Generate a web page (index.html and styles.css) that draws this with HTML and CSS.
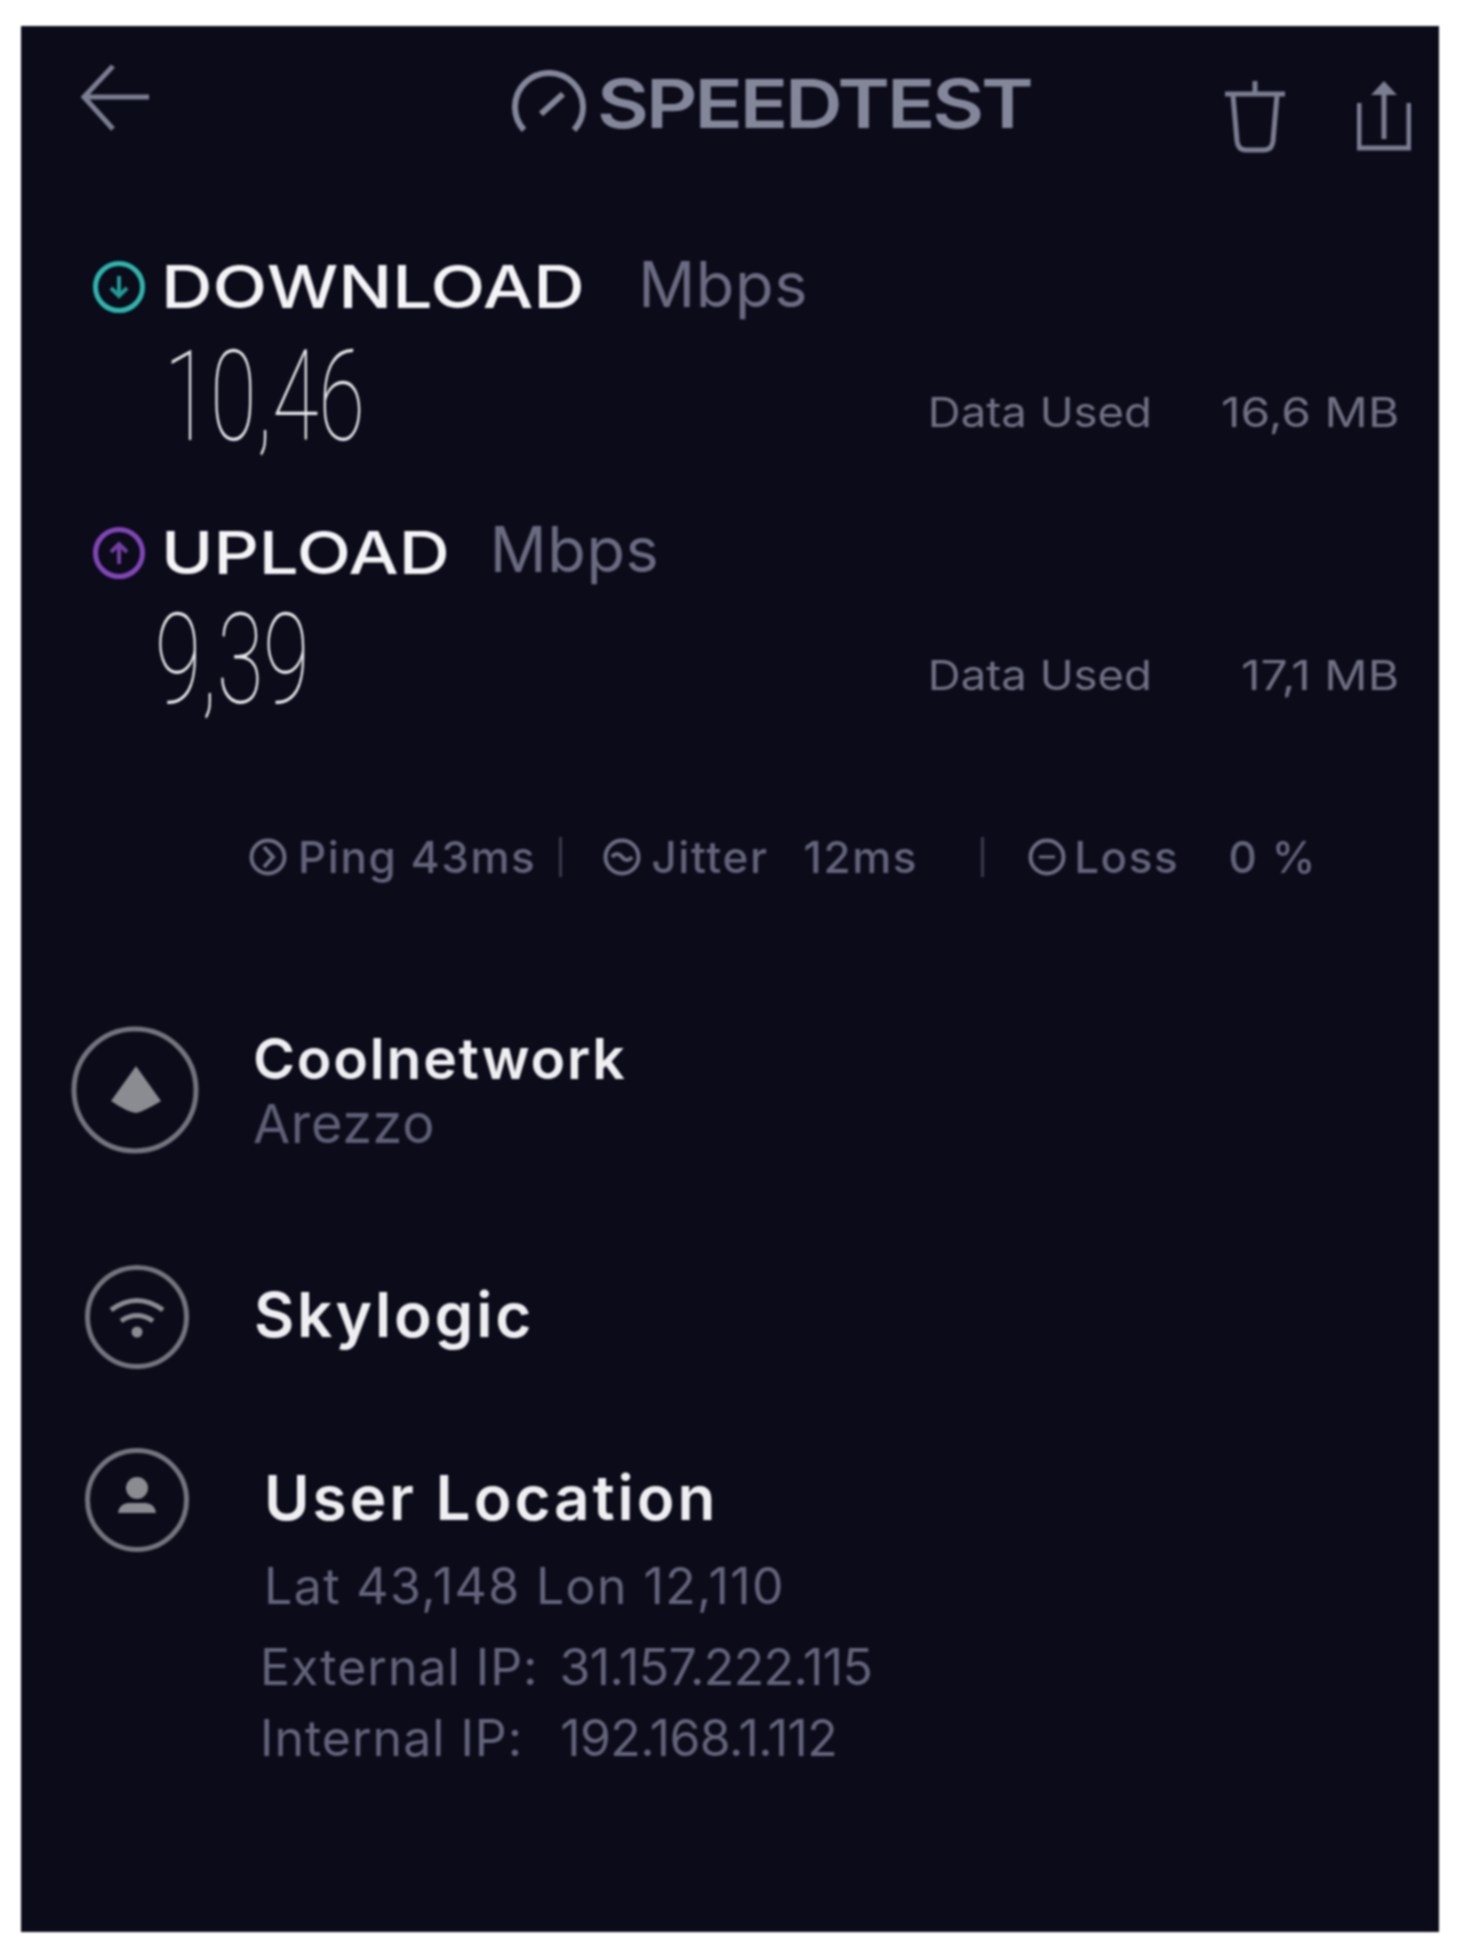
FILE: index.html
```html
<!DOCTYPE html>
<html lang="en">
<head>
<meta charset="utf-8">
<title>Speedtest result</title>
<link rel="stylesheet" href="styles.css">
</head>
<body>
<main class="card">
  <header class="topbar">
    <svg class="ic-back" width="69" height="66" viewBox="0 0 69 66"><path d="M68 32H3M32 1L3 32l29 32" fill="none" stroke="#7b7d90" stroke-width="5"/></svg>
    <div class="logo">
      <svg class="ic-gauge" width="74" height="62" viewBox="0 0 74 62"><path d="M12 60A34 34 0 1 1 62 60" fill="none" stroke="#84869a" stroke-width="6"/><path d="M29 44L51 24" stroke="#84869a" stroke-width="6"/></svg>
      <span class="logo-text">SPEEDTEST</span>
    </div>
    <svg class="ic-trash" width="62" height="72" viewBox="0 0 62 72"><path d="M31 0v12M1 13h60" stroke="#7b7d90" stroke-width="5" fill="none"/><path d="M9 14l4 46q1 9 9 9h18q8 0 9-9l4-46" stroke="#7b7d90" stroke-width="5" fill="none"/></svg>
    <svg class="ic-share" width="54" height="70" viewBox="0 0 54 70"><path d="M2 22v45h50V22" stroke="#7b7d90" stroke-width="5" fill="none"/><path d="M27 6v52" stroke="#7b7d90" stroke-width="5"/><path d="M27 0L14 14h26z" fill="#7b7d90"/></svg>
  </header>

  <section class="metric metric-down">
    <div class="metric-head">
      <svg class="ic-dir" width="52" height="52" viewBox="0 0 52 52"><circle cx="26" cy="26" r="23.5" fill="none" stroke="#2fb5ad" stroke-width="5"/><path d="M26 15v20M18 27l8 8 8-8" fill="none" stroke="#239b96" stroke-width="4"/></svg>
      <span class="label">DOWNLOAD</span>
      <span class="unit unit-down">Mbps</span>
    </div>
    <div class="metric-body">
      <span class="value value-down">10,46</span>
      <span class="used">Data Used</span>
      <span class="used-val">16,6 MB</span>
    </div>
  </section>

  <section class="metric metric-up">
    <div class="metric-head">
      <svg class="ic-dir" width="52" height="52" viewBox="0 0 52 52"><circle cx="26" cy="26" r="23.5" fill="none" stroke="#8146b8" stroke-width="5"/><path d="M26 37V17M18 25l8-8 8 8" fill="none" stroke="#7240a3" stroke-width="4"/></svg>
      <span class="label label-up">UPLOAD</span>
      <span class="unit unit-up">Mbps</span>
    </div>
    <div class="metric-body">
      <span class="value value-up">9,39</span>
      <span class="used">Data Used</span>
      <span class="used-val">17,1 MB</span>
    </div>
  </section>

  <section class="stats">
    <svg class="ic-stat" width="38" height="38" viewBox="0 0 38 38"><circle cx="19" cy="19" r="16.5" fill="none" stroke="#6b6c80" stroke-width="4"/><path d="M15 9l9 10-9 10" fill="none" stroke="#6b6c80" stroke-width="4"/></svg>
    <span class="stat stat-ping">Ping 43ms</span>
    <i class="sep sep-a"></i>
    <svg class="ic-stat ic-jitter" width="38" height="38" viewBox="0 0 38 38"><circle cx="19" cy="19" r="16.5" fill="none" stroke="#6b6c80" stroke-width="4"/><path d="M9 19q5-6 10 0t10 0" fill="none" stroke="#6b6c80" stroke-width="4"/></svg>
    <span class="stat stat-jitter">Jitter</span>
    <span class="stat stat-jit-val">12ms</span>
    <i class="sep sep-b"></i>
    <svg class="ic-stat ic-loss" width="38" height="38" viewBox="0 0 38 38"><circle cx="19" cy="19" r="16.5" fill="none" stroke="#6b6c80" stroke-width="4"/><path d="M11 19h16" stroke="#6b6c80" stroke-width="3"/></svg>
    <span class="stat stat-loss">Loss</span>
    <span class="stat stat-loss-val">0 %</span>
  </section>

  <section class="row row-host">
    <svg class="ic-big" width="128" height="128" viewBox="0 0 128 128"><circle cx="64" cy="64" r="61" fill="none" stroke="#74747f" stroke-width="5"/><path d="M65 40L90 75Q72 86 65 87Q56 86 40 75z" fill="#8b8b92"/></svg>
    <div class="row-text">
      <div class="title title-host">Coolnetwork</div>
      <div class="sub">Arezzo</div>
    </div>
  </section>

  <section class="row row-isp">
    <svg class="ic-small" width="104" height="106" viewBox="0 0 104 106"><circle cx="52" cy="53" r="49.5" fill="none" stroke="#74747f" stroke-width="5"/><path d="M26 46q26-19 52 0M36 57q16-11 32 0" fill="none" stroke="#8b8b92" stroke-width="5"/><circle cx="52" cy="68" r="5.5" fill="#8b8b92"/></svg>
    <div class="title">Skylogic</div>
  </section>

  <section class="row row-user">
    <svg class="ic-small" width="104" height="106" viewBox="0 0 104 106"><circle cx="52" cy="53" r="49.5" fill="none" stroke="#74747f" stroke-width="5"/><circle cx="52" cy="41" r="11" fill="#8b8b92"/><path d="M33 66q1-9 10-10h18q9 1 10 10z" fill="#8b8b92"/></svg>
    <div class="row-text user-text">
      <div class="title title-user">User Location</div>
      <div class="detail detail-lat">Lat 43,148 Lon 12,110</div>
      <div class="detail detail-ip"><span class="ip-label">External IP:</span><span class="ip-val ip-ext">31.157.222.115</span></div>
      <div class="detail detail-ip2"><span class="ip-label">Internal IP:</span><span class="ip-val ip-int">192.168.1.112</span></div>
    </div>
  </section>
</main>
</body>
</html>
```
FILE: styles.css
```css
* { box-sizing: border-box; }
html, body { margin: 0; background: #fff; }
body { padding: 26px 22px 21px 21px; }
.card {
  height: 1906px;
  background: #0b0b1a;
  font-family: Inter, "Liberation Sans", sans-serif;
  overflow: hidden;
  filter: blur(1px);
}
.topbar { display: flex; align-items: flex-start; padding: 39px 0 0 60px; height: 235px; }
.ic-gauge { margin-left: 362px; }
.logo { display: flex; align-items: center; margin-top: 3px; }
.logo-text { margin-left: 11px; padding-top: 4px; font-size: 68px; line-height: 62px; font-weight: 600; color: #84869a; letter-spacing: -2.6px; transform: scaleX(1.175); transform-origin: left center; }
.ic-trash { margin-left: 258px; margin-top: 16px; }
.ic-share { margin-left: 71px; margin-top: 16px; }

.metric-head { display: flex; align-items: center; height: 52px; padding-left: 72px; }
.label { margin-left: 16px; font-size: 59px; line-height: 52px; font-weight: 500; color: #f4f4f6; transform: scaleX(1.21); transform-origin: left center; }
.label-up { transform: scaleX(1.2); }
.unit { font-size: 63px; line-height: 52px; font-weight: 400; color: #6a6b80; letter-spacing: .6px; }
.unit-down { margin-left: 127px; margin-bottom: 6px; }
.unit-up { margin-left: 88px; margin-bottom: 8px; }
.metric-body { display: flex; align-items: flex-start; height: 100px; margin-top: 34px; }
.metric-up .metric-body { margin-top: 31px; }
.value { display: block; width: 0; white-space: nowrap; font-family: Roboto, sans-serif; font-weight: 100; font-size: 126px; line-height: 100px; color: #e6e6ea; transform: scaleX(.67); transform-origin: left center; }
.value-down { margin-left: 143px; }
.value-up { margin-left: 134px; }
.used { margin-top: 43px; font-size: 41px; line-height: 44px; font-weight: 400; color: #6f7082; transform: scaleX(1.11); transform-origin: right center; }
.value-down + .used { margin-left: 786px; }
.value-up + .used { margin-left: 795px; }
.used-val { margin-top: 43px; margin-left: auto; margin-right: 40px; font-size: 41px; line-height: 44px; color: #6f7082; transform: scaleX(1.17); transform-origin: right center; }
.metric-up { margin-top: 80px; }

.stats { display: flex; align-items: center; height: 44px; margin-top: 125px; padding-left: 228px; }
.stat { font-size: 44px; line-height: 44px; font-weight: 500; letter-spacing: 1.6px; color: #63647a; white-space: nowrap; }
.ic-stat { flex: none; }
.stat-ping { margin-left: 11px; }
.sep { display: block; width: 3px; height: 40px; background: #3a3a4c; }
.sep-a { margin-left: 23px; }
.ic-jitter { margin-left: 41px; }
.stat-jitter { margin-left: 10px; }
.stat-jit-val { margin-left: 35px; }
.sep-b { margin-left: 63px; }
.ic-loss { margin-left: 44px; }
.stat-loss { margin-left: 8px; }
.stat-loss-val { margin-left: 49px; }

.row { display: flex; }
.row-host { margin-top: 147px; padding-left: 50px; align-items: center; }
.row-host .row-text { margin-left: 54px; }
.title { font-size: 62px; line-height: 62px; font-weight: 600; letter-spacing: 2.8px; color: #efeff2; white-space: nowrap; }
.title-host { font-size: 57px; letter-spacing: 1.8px; }
.title-user { letter-spacing: 3px; }
.sub { margin-top: 5px; font-size: 54px; line-height: 58px; font-weight: 400; letter-spacing: .6px; color: #5f6076; }
.row-isp { margin-top: 110px; padding-left: 64px; align-items: center; }
.row-isp .title { margin-left: 65px; margin-bottom: 4px; }
.row-user { margin-top: 77px; padding-left: 64px; align-items: flex-start; }
.user-text { margin-left: 75px; margin-top: 20px; }
.detail { font-size: 50px; line-height: 58px; font-weight: 400; color: #63647a; white-space: nowrap; }
.detail-lat { margin-top: 28px; letter-spacing: 1.4px; }
.detail-ip { display: flex; margin-top: 23px; margin-left: -4px; }
.detail-ip2 { display: flex; margin-top: 13px; margin-left: -4px; }
.ip-label { letter-spacing: 1px; }
.ip-val { letter-spacing: -.6px; }
.ip-ext { margin-left: 21px; }
.ip-int { margin-left: 37px; }
```
